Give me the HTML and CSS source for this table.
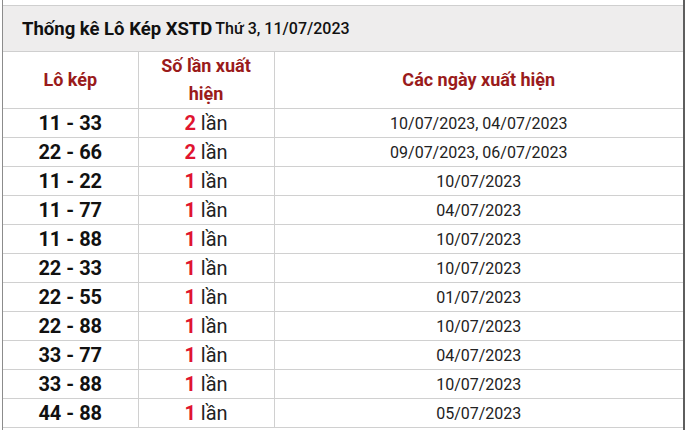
FILE: index.html
```html
<!DOCTYPE html>
<html lang="vi">
<head>
<meta charset="utf-8">
<title>Thống kê Lô Kép XSTD</title>
<link rel="stylesheet" href="styles.css">
</head>
<body>
<div class="wrap">
  <div class="title"><b>Thống kê Lô Kép XSTD</b> <span class="date">Thứ 3, 11/07/2023</span></div>
  <table class="stats">
    <colgroup><col class="c1"><col class="c2"><col class="c3"></colgroup>
    <thead>
      <tr><th>Lô kép</th><th>Số lần xuất<br>hiện</th><th>Các ngày xuất hiện</th></tr>
    </thead>
    <tbody>
      <tr><td class="pair">11 - 33</td><td class="cnt"><b>2</b> lần</td><td class="days">10/07/2023, 04/07/2023</td></tr>
      <tr><td class="pair">22 - 66</td><td class="cnt"><b>2</b> lần</td><td class="days">09/07/2023, 06/07/2023</td></tr>
      <tr><td class="pair">11 - 22</td><td class="cnt"><b>1</b> lần</td><td class="days">10/07/2023</td></tr>
      <tr><td class="pair">11 - 77</td><td class="cnt"><b>1</b> lần</td><td class="days">04/07/2023</td></tr>
      <tr><td class="pair">11 - 88</td><td class="cnt"><b>1</b> lần</td><td class="days">10/07/2023</td></tr>
      <tr><td class="pair">22 - 33</td><td class="cnt"><b>1</b> lần</td><td class="days">10/07/2023</td></tr>
      <tr><td class="pair">22 - 55</td><td class="cnt"><b>1</b> lần</td><td class="days">01/07/2023</td></tr>
      <tr><td class="pair">22 - 88</td><td class="cnt"><b>1</b> lần</td><td class="days">10/07/2023</td></tr>
      <tr><td class="pair">33 - 77</td><td class="cnt"><b>1</b> lần</td><td class="days">04/07/2023</td></tr>
      <tr><td class="pair">33 - 88</td><td class="cnt"><b>1</b> lần</td><td class="days">10/07/2023</td></tr>
      <tr><td class="pair">44 - 88</td><td class="cnt"><b>1</b> lần</td><td class="days">05/07/2023</td></tr>
    </tbody>
  </table>
</div>
</body>
</html>
```
FILE: styles.css
```css
html, body {
  margin: 0;
  padding: 0;
  background: #fff;
  overflow: hidden;
}
body {
  font-family: Roboto, "Noto Sans", Arial, sans-serif;
  color: #222;
}
.wrap {
  margin-left: 2px;
  width: 683px;
  height: 430px;
  box-sizing: border-box;
  border-left: 1px solid #8c8c8c;
  border-right: 2px solid #5e5e5e;
  padding-top: 5px;
}
.title {
  height: 45px;
  box-sizing: content-box;
  background: #eeeded;
  border-top: 1px solid #cfcfcf;
  border-bottom: 1px solid #cfcfcf;
  padding-left: 19px;
  display: flex;
  align-items: center;
  gap: 3px;
  font-size: 18.5px;
  color: #111;
}
.title b { font-weight: 700; }
.title .date { font-size: 16px; font-weight: 500; }
.stats {
  width: 100%;
  border-collapse: collapse;
  table-layout: fixed;
}
.c1 { width: 135px; }
.c2 { width: 136px; }
.stats th, .stats td {
  border: 1px solid #d0d0d0;
  text-align: center;
  padding: 0;
}
.stats tr > :first-child { border-left: 0; }
.stats tr > :last-child { border-right: 0; }
.stats thead tr > * { border-top: 0; }
.stats th {
  height: 56px;
  font-size: 18px;
  font-weight: 700;
  line-height: 28px;
  color: #9a1b1b;
}
.stats td {
  height: 28px;
}
.pair {
  font-size: 20px;
  font-weight: 700;
  color: #111;
}
.cnt {
  font-size: 20px;
  color: #222;
}
.cnt b {
  color: #e0142f;
  font-weight: 700;
}
.days {
  font-size: 16px;
  color: #222;
}
```
